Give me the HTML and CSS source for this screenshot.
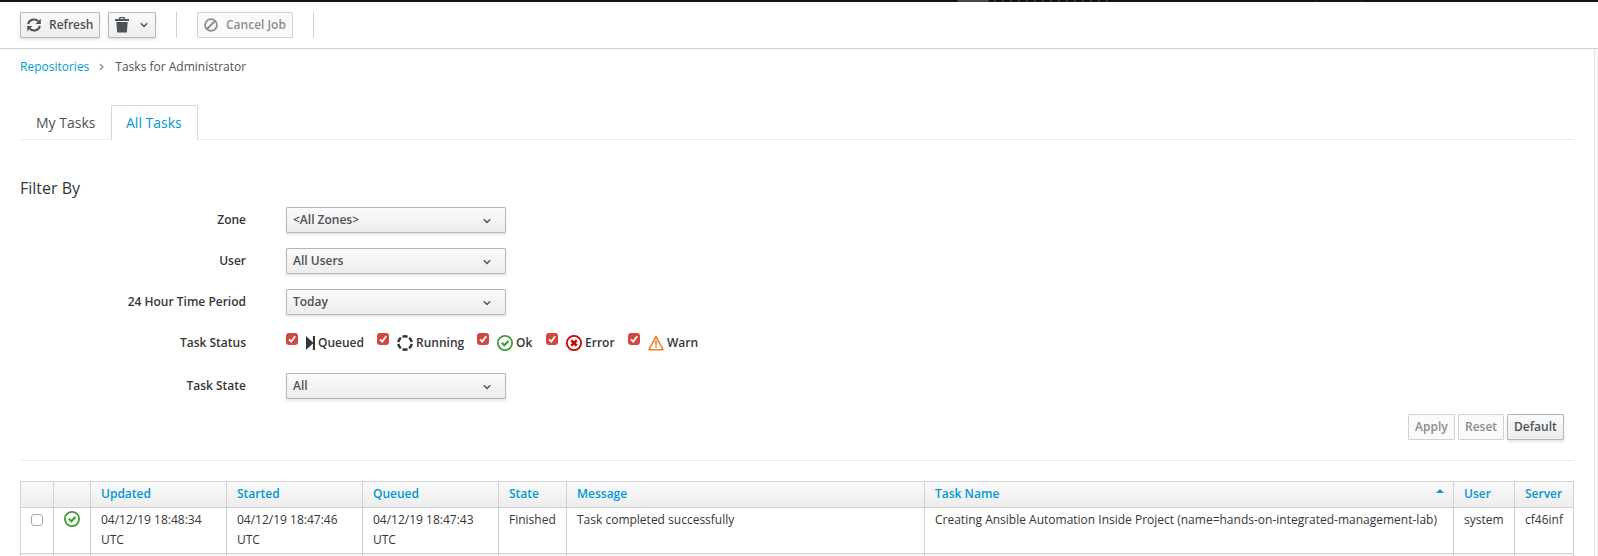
FILE: index.html
```html
<!DOCTYPE html>
<html lang="en">
<head>
<meta charset="utf-8">
<title>Tasks for Administrator</title>
<link rel="stylesheet" href="styles.css">
</head>
<body>
<svg class="defs" aria-hidden="true">
  <symbol id="chevron" viewBox="0 0 8 6"><path d="M.8 1.2 4 4.4 7.2 1.2" fill="none" stroke="currentColor" stroke-width="1.4"/></symbol>
  <symbol id="tick" viewBox="0 0 12 12"><path d="M3 6.4 5.2 8.6 9.2 3.2" fill="none" stroke="#fff" stroke-width="1.7"/></symbol>
  <symbol id="ok" viewBox="0 0 16 16"><circle cx="8" cy="8" r="7.1" fill="none" stroke="#3f9c35" stroke-width="1.8"/><path d="M4.8 7.8 7.3 10.2 11.4 6.1" fill="none" stroke="#3f9c35" stroke-width="2.2"/></symbol>
</svg>
<div class="masthead"><svg width="1598" height="2"><path d="M958 0H989L988 2H957Z" fill="#484848"/><path d="M994 1H1110" stroke="#3c3838" stroke-width="2" stroke-dasharray="1.5 6.5"/><path d="M1315 0V2M1362 0V2" stroke="#343030"/></svg></div>
<header class="toolbar">
  <button class="btn refresh"><svg width="14" height="14" viewBox="0 0 14 14"><path d="M1.2 6.2A5.8 5.2 0 0 1 11.2 3.2M12.8 7.8A5.8 5.2 0 0 1 2.8 10.8" fill="none" stroke="currentColor" stroke-width="2.1"/><path d="M13.8 .8V6H8.6ZM.2 13.2V8H5.4Z" fill="currentColor"/></svg>Refresh</button>
  <button class="btn trash"><svg width="14" height="16" viewBox="0 0 14 16"><path d="M0 2H4V1Q4 0 5 0H9Q10 0 10 1V2H14V4H0ZM5.2 1.2V2H8.8V1.2ZM1.3 5H12.7L11.8 15.5H2.2Z" fill="currentColor" fill-rule="evenodd"/></svg><svg width="8" height="6"><use href="#chevron"/></svg></button>
  <span class="divider"></span>
  <button class="btn disabled cancel"><svg width="14" height="14" viewBox="0 0 14 14"><circle cx="7" cy="7" r="5.9" fill="none" stroke="currentColor" stroke-width="1.8"/><path d="M3 11 11 3" stroke="currentColor" stroke-width="1.8"/></svg>Cancel Job</button>
  <span class="divider"></span>
</header>
<main class="content">
  <nav class="breadcrumb"><a>Repositories</a><svg width="5" height="8" viewBox="0 0 5 8"><path d="M.8 1 4 4 .8 7" fill="none" stroke="#8b8d8f" stroke-width="1.2"/></svg><span>Tasks for Administrator</span></nav>
  <ul class="tabs"><li>My Tasks</li><li class="active">All Tasks</li></ul>
  <h3>Filter By</h3>
  <form class="filters">
    <div class="row"><label>Zone</label><div class="btn select">&lt;All Zones&gt;<svg width="8" height="6"><use href="#chevron"/></svg></div></div>
    <div class="row"><label>User</label><div class="btn select">All Users<svg width="8" height="6"><use href="#chevron"/></svg></div></div>
    <div class="row"><label>24 Hour Time Period</label><div class="btn select">Today<svg width="8" height="6"><use href="#chevron"/></svg></div></div>
    <div class="row status"><label>Task Status</label>
      <div class="checks">
        <span class="check queued"><svg class="box"><use href="#tick"/></svg><svg class="icon" width="9" height="14" viewBox="0 0 9 14"><path d="M0 0 6.9 6.4V0H9V14H6.9V7.6L0 14Z" fill="#363636"/></svg>Queued</span>
        <span class="check running"><svg class="box"><use href="#tick"/></svg><svg class="icon" width="16" height="16" viewBox="0 0 16 16"><circle cx="8" cy="8" r="6.7" fill="none" stroke="#363636" stroke-width="2.5" pathLength="60" stroke-dasharray="7.4 2.6" stroke-dashoffset="-1.3"/></svg>Running</span>
        <span class="check good"><svg class="box"><use href="#tick"/></svg><svg class="icon" width="16" height="16"><use href="#ok"/></svg>Ok</span>
        <span class="check error"><svg class="box"><use href="#tick"/></svg><svg class="icon" width="16" height="16" viewBox="0 0 16 16"><circle cx="8" cy="8" r="7.1" fill="none" stroke="#c00" stroke-width="1.8"/><path d="M5.3 5.3 10.7 10.7M10.7 5.3 5.3 10.7" stroke="#c00" stroke-width="2.6"/></svg>Error</span>
        <span class="check warn"><svg class="box"><use href="#tick"/></svg><svg class="icon" width="16" height="16" viewBox="0 0 16 16"><path d="M8 1.5 15.1 14.8H.9Z" fill="none" stroke="#f0812a" stroke-width="1.6" stroke-linejoin="round"/><path d="M8 5.5V10.2M8 11.3V13.1" stroke="#f0812a" stroke-width="1.8"/></svg>Warn</span>
      </div>
    </div>
    <div class="row"><label>Task State</label><div class="btn select">All<svg width="8" height="6"><use href="#chevron"/></svg></div></div>
  </form>
  <div class="actions"><button class="btn disabled apply">Apply</button><button class="btn disabled reset">Reset</button><button class="btn default">Default</button></div>
  <hr>
  <table>
    <colgroup><col class="c-box"><col class="c-icon"><col class="c-date"><col class="c-date"><col class="c-date"><col class="c-state"><col class="c-msg"><col class="c-name"><col class="c-user"><col class="c-server"></colgroup>
    <thead><tr><th></th><th></th><th>Updated</th><th>Started</th><th>Queued</th><th>State</th><th>Message</th><th><div class="sorted">Task Name<svg width="8" height="4"><path d="M0 4 4 0 8 4Z" fill="#0099d3"/></svg></div></th><th>User</th><th>Server</th></tr></thead>
    <tbody>
      <tr><td class="mid"><span class="unchecked"></span></td><td class="mid"><svg class="state" width="16" height="16"><use href="#ok"/></svg></td><td>04/12/19 18:48:34 UTC</td><td>04/12/19 18:47:46 UTC</td><td>04/12/19 18:47:43 UTC</td><td>Finished</td><td>Task completed successfully</td><td class="nowrap">Creating Ansible Automation Inside Project (name=hands-on-integrated-management-lab)</td><td>system</td><td>cf46inf</td></tr>
      <tr class="next"><td></td><td></td><td></td><td></td><td></td><td></td><td></td><td></td><td></td><td></td></tr>
    </tbody>
  </table>
</main>
</body>
</html>
```
FILE: styles.css
```css
* { box-sizing: border-box; }
html, body { height: 556px; overflow: hidden; }
body { margin: 0; background: #fff; color: #363636; font: 12px/20px "Open Sans", sans-serif; }
svg { display: block; flex: none; }
.defs { display: none; }
.masthead { height: 2px; background: #151212; }
.toolbar { display: flex; height: 47px; padding: 10px 20px 0; border-bottom: 1px solid #d1d1d1; }
.btn { display: flex; align-items: center; height: 26px; margin: 0; padding: 0 6px; border: 1px solid #b7b7b7; border-radius: 1px; background: linear-gradient(#fafafa, #ededed); box-shadow: 0 2px 3px rgba(3, 3, 3, .1); color: #4d5258; font: 600 12px/20px "Open Sans", sans-serif; white-space: nowrap; }
.btn.disabled { border-color: #d1d1d1; background: #fafafa; box-shadow: none; color: #8b8d8f; }
.refresh { width: 80px; gap: 8px; }
.trash { width: 48px; margin-left: 8px; gap: 11px; }
.divider { width: 1px; height: 26px; margin: 0 20px; background: #d1d1d1; }
.cancel { width: 96px; gap: 8px; }
.content { width: 1595px; height: 507px; padding: 0 20px; overflow: hidden; border-right: 1px solid #e4e4e4; box-shadow: 3px 0 #fafafa; }
.breadcrumb { display: flex; align-items: center; padding-top: 8px; height: 28px; color: #4d5258; }
.breadcrumb a { color: #0099d3; }
.breadcrumb svg { margin: 0 11px 0 10px; }
.tabs { display: flex; height: 35px; margin: 28px 0 0; padding: 0; list-style: none; border-bottom: 1px solid #ededed; color: #4d5258; font-size: 14px; line-height: 34px; }
.tabs li { height: 35px; width: 91px; padding: 1px 0 0 16px; }
.tabs .active { width: 87px; padding: 0 0 0 14px; border: 1px solid #d8d8d8; border-bottom: 0; background: #fff; color: #0099d3; }
h3 { margin: 37px 0 0; font-size: 16px; font-weight: 400; line-height: 22px; }
.filters { margin: 8px 0 0; }
.row { display: grid; grid-template-columns: 226px 1fr; column-gap: 40px; align-items: start; height: 41px; }
.row label { padding-top: 3px; text-align: right; font-weight: 600; }
.row.status { height: 43px; }
.select { width: 220px; padding-right: 14px; padding-bottom: 1px; justify-content: space-between; }
.select svg { margin-top: 3px; }
.checks { display: flex; padding-top: 3px; font-weight: 600; }
.check { display: flex; align-items: flex-start; }
.box { width: 12px; height: 12px; border-radius: 3px; background: #ce4844; }
.icon { margin: 2px 3px 0 8px; }
.queued { width: 91px; }
.queued .icon { margin-top: 3px; }
.running { width: 100px; }
.good { width: 69px; }
.error { width: 82px; }
.actions { display: flex; justify-content: flex-end; gap: 3px; padding-right: 10px; }
.apply { width: 47px; }
.reset { width: 46px; }
.default { width: 57px; }
hr { height: 1px; margin: 20px 0; border: 0; background: #ededed; }
table { width: 1554px; border-collapse: collapse; table-layout: fixed; }
.c-box { width: 33px; }
.c-icon { width: 37px; }
.c-date { width: 136px; }
.c-state { width: 68px; }
.c-msg { width: 358px; }
.c-name { width: 529px; }
.c-user { width: 61px; }
.c-server { width: 59px; }
th, td { padding: 2px 10px 3px; border: 1px solid #d1d1d1; text-align: left; vertical-align: top; }
th { height: 26px; color: #0099d3; font-weight: 600; }
thead tr { background: linear-gradient(#fafafa, #ededed); }
tbody td { height: 46px; }
.sorted { display: flex; justify-content: space-between; }
.sorted svg { margin: 5px -1px 0 0; }
.unchecked { display: block; width: 12px; height: 12px; margin-top: 4px; border: 1px solid #a9a9a9; border-radius: 3px; background: #fff; }
.state { margin-top: 1px; }
.nowrap { white-space: nowrap; }
.next td { height: 3px; padding: 0; border-bottom: 0; background: #f5f5f5; }
```
